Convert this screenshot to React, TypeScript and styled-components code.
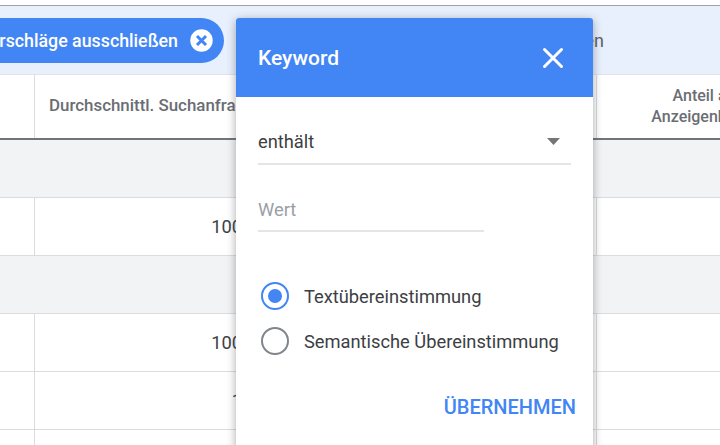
import React from "react";
import styled, { createGlobalStyle } from "styled-components";

const Global = createGlobalStyle`
  html, body { margin: 0; padding: 0; background: #fff; }
  * { box-sizing: border-box; }
`;

const Page = styled.div`
  position: relative;
  width: 720px;
  height: 445px;
  overflow: hidden;
  background: #fff;
  font-family: Roboto, "Liberation Sans", sans-serif;
  color: #3c4043;
`;

const TopEdge = styled.div`
  height: 6px;
  background: #fff;
  border-bottom: 1px solid #a0a2a6;
`;

const FilterBar = styled.div`
  display: flex;
  align-items: center;
  height: 69px;
  background: #e8f0fe;
  border-bottom: 1px solid #dfe3ea;
  white-space: nowrap;
`;

const Chip = styled.div`
  flex: none;
  display: flex;
  align-items: center;
  justify-content: flex-end;
  gap: 12px;
  width: 264px;
  height: 45px;
  margin-left: -40px;
  padding-right: 11px;
  border-radius: 23px;
  background: #4285f4;
  color: #fff;
  font-size: 17.8px;
  font-weight: 500;
`;

const ChipText = styled.span`
  flex: none;
`;

const FilterLink = styled.span`
  flex: none;
  margin-left: 23px;
  width: 357px;
  text-align: right;
  font-size: 18px;
  color: #5f6368;
`;

const Row = styled.div<{ $height: number; $shade?: boolean; $strong?: boolean }>`
  display: grid;
  grid-template-columns: 35px 280px 282px 214px;
  height: ${(p) => p.$height}px;
  background: ${(p) => (p.$shade ? "#f1f3f4" : "#fff")};
  border-bottom: ${(p) => (p.$strong ? "2px solid #70757a" : "1px solid #dadce0")};
`;

const Cell = styled.div<{ $divider?: boolean }>`
  min-width: 0;
  border-right: ${(p) => (p.$divider ? "1px solid #dadce0" : "none")};
`;

const HeaderCell = styled(Cell)`
  display: flex;
  align-items: center;
  padding: 0 0 2px 14px;
  font-size: 16.9px;
  font-weight: 500;
  line-height: 21px;
  color: #6a6e73;
  white-space: nowrap;
`;

const CenteredHeader = styled(HeaderCell)`
  justify-content: center;
  padding-left: 0;
  font-size: 16px;
  text-align: center;
`;

const ValueCell = styled(Cell)`
  display: flex;
  align-items: center;
  justify-content: flex-end;
  padding-right: 13px;
  font-size: 18.3px;
  color: #3c4043;
  white-space: nowrap;
`;

const Modal = styled.section`
  position: absolute;
  left: 236px;
  top: 18px;
  width: 357px;
  height: 440px;
  background: #fff;
  border-radius: 3px 3px 0 0;
  box-shadow: 0 2px 10px rgba(60, 64, 67, 0.45);
`;

const ModalHeader = styled.header`
  display: flex;
  align-items: center;
  justify-content: space-between;
  height: 79px;
  padding: 0 28px 0 22px;
  background: #4285f4;
  border-radius: 3px 3px 0 0;
  color: #fff;
`;

const ModalTitle = styled.h2`
  margin: 0;
  font-size: 21px;
  font-weight: 500;
`;

const ModalBody = styled.div`
  display: flex;
  flex-direction: column;
  padding: 0 22px;
`;

const SelectField = styled.div`
  display: flex;
  align-items: center;
  justify-content: space-between;
  height: 68px;
  padding: 23px 11px 0 0;
  border-bottom: 2px solid #e4e5e7;
  font-size: 18.3px;
  color: #3c4043;
`;

const InputField = styled.div`
  display: flex;
  align-items: center;
  width: 226px;
  height: 67px;
  padding-top: 24px;
  border-bottom: 2px solid #e4e5e7;
  font-size: 18.3px;
  color: #9aa0a6;
`;

const RadioGroup = styled.div`
  display: flex;
  flex-direction: column;
  gap: 17px;
  margin-top: 50px;
`;

const RadioRow = styled.label`
  display: flex;
  align-items: center;
  gap: 15px;
  height: 28px;
  padding-left: 3px;
  font-size: 18.3px;
  color: #3c4043;
`;

const RadioMark = styled.span<{ $on?: boolean }>`
  flex: none;
  display: flex;
  align-items: center;
  justify-content: center;
  width: 28px;
  height: 28px;
  border-radius: 50%;
  border: 2.5px solid ${(p) => (p.$on ? "#4285f4" : "#80868b")};
  &::after {
    content: "";
    display: ${(p) => (p.$on ? "block" : "none")};
    width: 14px;
    height: 14px;
    border-radius: 50%;
    background: #4285f4;
  }
`;

const Actions = styled.div`
  display: flex;
  justify-content: flex-end;
  margin-top: 40px;
`;

const ApplyButton = styled.button`
  margin-right: -5px;
  padding: 0;
  border: 0;
  background: none;
  font-family: inherit;
  font-size: 20px;
  font-weight: 500;
  line-height: 24px;
  color: #4285f4;
`;

const CloseGlyph = () => (
  <svg width="24" height="24" viewBox="0 0 24 24" aria-hidden="true">
    <path d="M3.5 3.5 L20.5 20.5 M20.5 3.5 L3.5 20.5" stroke="#fff" strokeWidth="3" strokeLinecap="round" />
  </svg>
);

const ChipClose = () => (
  <svg width="23" height="23" viewBox="0 0 23 23" aria-hidden="true">
    <circle cx="11.5" cy="11.5" r="11.2" fill="#fff" />
    <path d="M7 7 L16 16 M16 7 L7 16" stroke="#4285f4" strokeWidth="3" />
  </svg>
);

const Caret = () => (
  <svg width="13" height="7" viewBox="0 0 13 7" aria-hidden="true">
    <path d="M0 0 H13 L6.5 7 Z" fill="#757575" />
  </svg>
);

const rows: { shade?: boolean; value?: string }[] = [
  { shade: true },
  { value: "100 - 1.000" },
  { shade: true },
  { value: "100 - 1.000" },
  { value: "1 - 1.000" },
  {},
];

export default function App() {
  return (
    <Page>
      <Global />
      <TopEdge />
      <FilterBar>
        <Chip>
          <ChipText>Vorschläge ausschließen</ChipText>
          <ChipClose />
        </Chip>
        <FilterLink>Filter hinzufügen und anwenden</FilterLink>
      </FilterBar>
      <Row $height={65} $strong>
        <Cell $divider />
        <HeaderCell>Durchschnittl. Suchanfragen pro Monat</HeaderCell>
        <Cell $divider />
        <CenteredHeader>
          Anteil an
          <br />
          Anzeigenblock
        </CenteredHeader>
      </Row>
      {rows.map((r, i) => (
        <Row key={i} $height={58} $shade={r.shade}>
          <Cell $divider={!r.shade} />
          <ValueCell>{r.value}</ValueCell>
          <Cell $divider={!r.shade} />
          <Cell />
        </Row>
      ))}
      <Modal>
        <ModalHeader>
          <ModalTitle>Keyword</ModalTitle>
          <CloseGlyph />
        </ModalHeader>
        <ModalBody>
          <SelectField>
            enthält
            <Caret />
          </SelectField>
          <InputField>Wert</InputField>
          <RadioGroup>
            <RadioRow>
              <RadioMark $on />
              Textübereinstimmung
            </RadioRow>
            <RadioRow>
              <RadioMark />
              Semantische Übereinstimmung
            </RadioRow>
          </RadioGroup>
          <Actions>
            <ApplyButton>ÜBERNEHMEN</ApplyButton>
          </Actions>
        </ModalBody>
      </Modal>
    </Page>
  );
}
